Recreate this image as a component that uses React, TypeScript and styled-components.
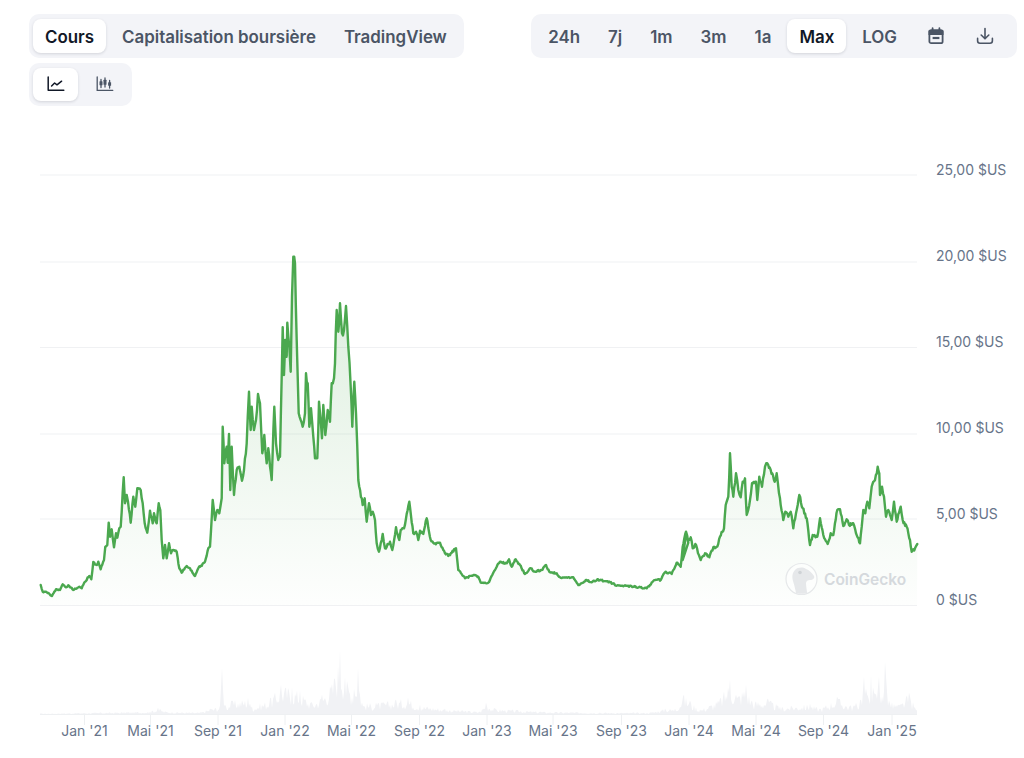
import React, { FC } from "react";
import styled, { createGlobalStyle } from "styled-components";

const GlobalStyle = createGlobalStyle`
  html, body {
    margin: 0;
    background: #fff;
    overflow: hidden;
  }
  body {
    font-family: Inter, "Liberation Sans", sans-serif;
  }
`;

const Page = styled.div`
  width: 1024px;
  height: 758px;
  overflow: hidden;
`;

const TopRow = styled.div`
  display: flex;
  justify-content: space-between;
  padding: 14px 7px 0 29px;
`;

const Segment = styled.div<{ $startPad?: number; $endPad?: number }>`
  display: inline-flex;
  gap: 4px;
  padding: 5px ${p => p.$endPad ?? 5}px 5px ${p => p.$startPad ?? 4}px;
  border-radius: 10px;
  background: #f3f4f8;
`;

const SubRow = styled.div`
  display: flex;
  padding: 5px 0 0 29px;
`;

const Tab = styled.button<{ $active?: boolean }>`
  box-sizing: border-box;
  height: 33.5px;
  padding: 3px 12px 0;
  border: 0;
  border-radius: 8px;
  font: 600 16.9px/30px Inter, "Liberation Sans", sans-serif;
  color: ${p => (p.$active ? "#111827" : "#4b5565")};
  background: ${p => (p.$active ? "#fff" : "transparent")};
  box-shadow: ${p => (p.$active ? "0 1px 3px rgba(16, 24, 40, 0.14)" : "none")};
`;

const IconTab = styled(Tab)`
  display: flex;
  align-items: center;
  justify-content: center;
  width: 45px;
  padding: 0;
`;

const ChartSvg = styled.svg`
  display: block;
  width: 1024px;
  height: 652px;
`;

const GridLine = styled.line`
  stroke: #f0f1f3;
  stroke-width: 1.2;
`;

const Tick = styled.line`
  stroke: #eef0f2;
  stroke-width: 1;
`;

const AxisText = styled.text`
  font: 400 14px Inter, "Liberation Sans", sans-serif;
  fill: #677489;
`;

const WatermarkText = styled.text`
  font: 600 15.5px Inter, "Liberation Sans", sans-serif;
  fill: #d5d9dd;
`;

const LineChartIcon: FC<{ color: string }> = ({ color }) => (
  <svg width="18" height="18" viewBox="0 0 18 18" fill="none" stroke={color} strokeWidth="1.5" strokeLinecap="round" strokeLinejoin="round">
    <path d="M1.2 2v13.3h15.6" />
    <path d="M4.6 11l3-3 2.4 1.8 4.6-3.6" />
  </svg>
);

const CandleIcon: FC<{ color: string }> = ({ color }) => (
  <svg width="18" height="18" viewBox="0 0 18 18" fill="none" stroke={color} strokeWidth="1.3" strokeLinecap="round">
    <path d="M1.2 2v13.3h15.6" />
    <path d="M5 4.5v8M9 3v9M13.6 5.5v7.5" />
    <rect x="3.5" y="6.2" width="3" height="4" rx=".5" fill={color} stroke="none" />
    <rect x="7.5" y="4.8" width="3" height="5" rx=".5" fill={color} stroke="none" />
    <rect x="12.1" y="7.2" width="3" height="3.6" rx=".5" fill={color} stroke="none" />
  </svg>
);

const CalendarIcon: FC = () => (
  <svg width="18" height="18" viewBox="0 0 18 18" fill="none" stroke="#4b5565" strokeWidth="1.8" strokeLinecap="round">
    <rect x="2.4" y="3.2" width="13.2" height="13" rx="1.8" />
    <path d="M5.6 1.2v3M12.4 1.2v3" />
    <path d="M2.4 4.4h13.2v2.6H2.4z" fill="#4b5565" />
    <path d="M5.6 11h6.8" strokeWidth="2.2" strokeLinecap="butt" />
  </svg>
);

const DownloadIcon: FC = () => (
  <svg width="18" height="18" viewBox="0 0 18 18" fill="none" stroke="#4b5565" strokeWidth="1.6" strokeLinecap="round" strokeLinejoin="round">
    <path d="M9 1.6v10M5.2 8l3.8 3.8L12.8 8" />
    <path d="M1.6 11.4v2.4a2.4 2.4 0 0 0 2.4 2.4h10a2.4 2.4 0 0 0 2.4-2.4v-2.4" />
  </svg>
);

// price line traced from the picture, three sections in crop coordinates (3x)
const sectionA = [
  32,1035, 38,1055, 48,1055, 66,1068, 78,1048, 90,1050, 98,1033, 108,1042, 115,1036, 130,1050, 148,1040, 155,1045,
  165,1025, 178,1008, 184,1018, 190,966, 200,975, 205,965, 212,988, 222,960, 226,920, 232,915, 236,848, 240,890,
  245,868, 252,922, 258,880, 262,893, 268,865, 272,860, 281,712, 285,790, 290,765, 294,785, 302,848, 310,770,
  316,800, 322,745, 332,750, 338,790, 344,850, 352,878, 360,812, 368,850, 372,820, 380,850, 386,790, 391,810,
  395,900, 400,955, 405,915, 410,955, 417,910, 423,940, 430,930, 440,935, 448,985, 455,998, 470,978, 480,985,
  495,1008, 505,985, 525,965, 535,925, 540,920, 548,780, 555,840, 562,810, 568,820, 575,775, 578,560, 583,670,
  590,620, 593,668, 597,582, 601,750, 605,620, 612,765, 620,690, 628,680, 636,722, 642,690, 650,610, 657,455,
  662,570, 665,500, 672,570, 678,540, 684,462, 690,490, 697,640, 703,585, 710,670, 715,625, 725,720, 733,500,
  738,610, 745,660, 750,650, 755,410, 758,262, 762,405, 766,300, 770,350, 772,248, 778,320, 782,395, 786,170,
  790,50, 795,70, 800,300, 806,520, 812,540, 818,560, 825,520, 828,400, 833,430, 838,560, 843,505, 850,590,
  855,655, 862,655, 867,485, 876,595, 880,495, 886,585, 893,510, 900,545, 905,430, 912,415, 915,370, 920,210,
  925,275, 930,190, 936,280, 942,270, 948,198, 955,320, 962,440, 967,560, 973,425, 978,520, 985,720,
];
const sectionB = [
  8,255, 14,235, 20,305, 27,250, 33,285, 38,275, 45,300, 50,370, 57,395, 68,342, 75,385, 90,365, 97,390, 108,322,
  118,360, 122,330, 132,325, 148,245, 160,340, 168,335, 175,360, 180,332, 190,342, 200,295, 212,360, 225,370,
  240,368, 255,400, 265,408, 288,385, 295,450, 315,475, 340,465, 355,470, 362,488, 385,488, 405,450, 410,440,
  420,425, 440,430, 447,418, 455,440, 467,418, 480,435, 495,462, 510,445, 525,455, 545,450, 558,435, 568,455,
  590,460, 600,472, 640,472, 655,495, 680,480, 695,487, 712,478, 760,490, 765,496, 800,497, 860,505, 885,480,
  895,478, 900,482, 917,455, 935,462, 950,428, 962,440, 968,380, 978,335, 985,368,
];
const sectionC = [
  8,420, 18,335, 24,365, 32,352, 38,385, 46,372, 62,420, 75,400, 88,412, 100,382, 112,380, 120,350, 132,325,
  137,255, 145,230, 150,100, 155,200, 160,230, 168,160, 175,210, 182,232, 188,185, 195,175, 200,285, 210,240,
  216,190, 228,185, 232,240, 238,170, 246,200, 255,140, 262,130, 272,150, 284,185, 290,160, 297,220, 310,300,
  316,275, 325,290, 332,275, 340,325, 348,280, 358,225, 368,265, 380,295, 390,375, 398,345, 412,350, 420,295,
  430,345, 443,372, 452,340, 460,345, 472,270, 480,268, 490,318, 500,298, 507,315, 520,310, 528,340, 540,370,
  550,270, 556,280, 562,245, 568,265, 575,200, 585,180, 593,140, 598,160, 600,225, 606,200, 612,230, 618,290,
  625,270, 635,300, 642,245, 650,305, 662,260, 668,300, 680,320, 690,360, 695,395, 705,385, 712,372,
];

const toScreen = (raw: number[], ox: number, oy: number) => {
  const out: [number, number][] = [];
  for (let i = 0; i < raw.length; i += 2) {
    out.push([ox + raw[i] / 3, oy + raw[i + 1] / 3]);
  }
  return out;
};

const makeRandom = (start: number) => {
  let seed = start;
  return () => {
    seed = (seed * 9301 + 49297) % 233280;
    return seed / 233280;
  };
};

// the traced vertices are too clean, so add daily noise between them
const roughen = (points: [number, number][]) => {
  const rnd = makeRandom(41);
  const out: [number, number][] = [];
  points.forEach((pt, i) => {
    out.push(pt);
    const next = points[i + 1];
    if (!next) return;
    const steps = Math.floor((next[0] - pt[0]) / 0.8);
    const top = Math.min(pt[1], next[1]);
    for (let s = 1; s < steps; s++) {
      const t = s / steps;
      const y = pt[1] + (next[1] - pt[1]) * t;
      const amp = 0.4 + (605 - y) * 0.018;
      // noise stays under the local high, so the traced peaks are not overshot
      out.push([pt[0] + (next[0] - pt[0]) * t, Math.max(top, y + (rnd() - 0.5) * 2 * amp)]);
    }
  });
  return out;
};

const price = roughen([
  ...toScreen(sectionA, 30, 240),
  ...toScreen(sectionB, 360, 420),
  ...toScreen(sectionC, 680, 420),
]);
const linePath = "M" + price.map(p => `${p[0].toFixed(1)},${p[1].toFixed(1)}`).join("L");
const areaPath = `${linePath}L917,605L40.5,605Z`;

// envelope of the volume histogram: [x, height]
const volumeShape: [number, number][] = [
  [40, 1], [100, 2], [150, 3], [158, 7], [165, 3], [200, 2], [210, 6], [220, 9], [222, 47], [225, 10], [232, 14],
  [248, 17], [252, 8], [270, 16], [281, 30], [292, 28], [300, 24], [312, 12], [322, 20], [334, 36], [340, 65],
  [345, 38], [354, 26], [358, 47], [362, 12], [376, 12], [396, 15], [408, 17], [420, 10], [445, 6], [480, 3],
  [486, 12], [495, 6], [540, 3], [600, 2], [650, 2], [665, 6], [675, 6], [684, 20], [690, 14], [700, 5], [720, 16],
  [730, 35], [736, 20], [746, 30], [752, 14], [768, 16], [780, 8], [810, 11], [820, 6], [837, 18], [850, 9], [860, 14],
  [864, 38], [868, 18], [871, 40], [875, 20], [879, 38], [882, 18], [885, 53], [889, 14], [900, 10], [909, 22], [917, 4],
];

const shapeAt = (x: number) => {
  for (let i = 1; i < volumeShape.length; i++) {
    const [x0, h0] = volumeShape[i - 1];
    const [x1, h1] = volumeShape[i];
    if (x <= x1) return h0 + ((h1 - h0) * (x - x0)) / (x1 - x0);
  }
  return 1;
};

const buildVolumePath = () => {
  const rnd = makeRandom(17);
  const peaks = new Set(volumeShape.map(v => v[0]));
  let d = "M40,714.5";
  for (let x = 40; x <= 917; x += 1) {
    const factor = peaks.has(x) ? 1 : 0.3 + 0.7 * rnd();
    d += `L${x},${(714.5 - shapeAt(x) * factor).toFixed(1)}`;
  }
  return `${d}L917,714.5Z`;
};

const yLabels = [
  { text: "25,00 $US", y: 175 },
  { text: "20,00 $US", y: 261 },
  { text: "15,00 $US", y: 346.5 },
  { text: "10,00 $US", y: 433 },
  { text: "5,00 $US", y: 519 },
  { text: "0 $US", y: 605 },
];

const gridYs = [175, 262, 347.5, 434, 519, 605.5];

const xLabels = [
  { text: "Jan '21", x: 84.5 },
  { text: "Mai '21", x: 150.5 },
  { text: "Sep '21", x: 218 },
  { text: "Jan '22", x: 285 },
  { text: "Mai '22", x: 351.5 },
  { text: "Sep '22", x: 419.5 },
  { text: "Jan '23", x: 487 },
  { text: "Mai '23", x: 553 },
  { text: "Sep '23", x: 621.5 },
  { text: "Jan '24", x: 689 },
  { text: "Mai '24", x: 756 },
  { text: "Sep '24", x: 823.5 },
  { text: "Jan '25", x: 892 },
];

const Chart: FC = () => (
  <ChartSvg viewBox="0 106 1024 652">
    <defs>
      <linearGradient id="priceFill" x1="0" y1="257" x2="0" y2="605" gradientUnits="userSpaceOnUse">
        <stop offset="0" stopColor="#4ba84f" stopOpacity="0.2" />
        <stop offset="1" stopColor="#4ba84f" stopOpacity="0.01" />
      </linearGradient>
    </defs>
    {gridYs.map(y => (
      <GridLine key={y} x1="40" x2="917" y1={y} y2={y} />
    ))}
    <path d={areaPath} fill="url(#priceFill)" />
    <path d={linePath} fill="none" stroke="#4ba84f" strokeWidth="2.4" strokeLinejoin="round" strokeLinecap="round" />
    {yLabels.map(l => (
      <AxisText key={l.text} x="936" y={l.y}>{l.text}</AxisText>
    ))}
    <path d={buildVolumePath()} fill="#f1f2f5" />
    <line x1="40" x2="917" y1="714.5" y2="714.5" stroke="#eef0f2" strokeWidth="1.2" />
    {xLabels.map(l => (
      <g key={l.text}>
        <Tick x1={l.x} x2={l.x} y1="715" y2="725" />
        <AxisText x={l.x} y="736" textAnchor="middle">{l.text}</AxisText>
      </g>
    ))}
    <g>
      <circle cx="801.5" cy="579" r="15.5" fill="#fff" fillOpacity="0.5" stroke="#e6e8ea" strokeWidth="1.2" />
      <path d="M796 593c-1-5-2-9-3-12-1-4-1-8 2-11 3-3 8-3 11-1 3 1 6 4 8 7 1 2-1 4-4 4-2 0-4 1-4 3 0 4 1 7 1 10-3 1-8 1-11 0z" fill="#e6e8ea" />
      <circle cx="800" cy="572.5" r="1.8" fill="#cfd3d6" />
      <WatermarkText x="824" y="584.5">CoinGecko</WatermarkText>
    </g>
  </ChartSvg>
);

const App: FC = () => (
  <Page>
    <GlobalStyle />
    <TopRow>
      <Segment>
        <Tab $active>Cours</Tab>
        <Tab>Capitalisation boursière</Tab>
        <Tab>TradingView</Tab>
      </Segment>
      <Segment $startPad={5} $endPad={10}>
        <Tab>24h</Tab>
        <Tab>7j</Tab>
        <Tab>1m</Tab>
        <Tab>3m</Tab>
        <Tab>1a</Tab>
        <Tab $active>Max</Tab>
        <Tab>LOG</Tab>
        <IconTab aria-label="Calendrier"><CalendarIcon /></IconTab>
        <IconTab aria-label="Télécharger"><DownloadIcon /></IconTab>
      </Segment>
    </TopRow>
    <SubRow>
      <Segment>
        <IconTab $active aria-label="Ligne"><LineChartIcon color="#111827" /></IconTab>
        <IconTab aria-label="Chandeliers"><CandleIcon color="#4b5565" /></IconTab>
      </Segment>
    </SubRow>
    <Chart />
  </Page>
);

export default App;
